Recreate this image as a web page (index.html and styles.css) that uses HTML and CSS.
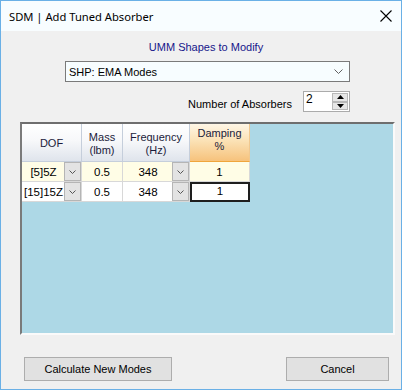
FILE: index.html
```html
<!DOCTYPE html>
<html>
<head>
<meta charset="utf-8">
<link rel="stylesheet" href="styles.css">
</head>
<body>
<div class="window">
  <div class="titlebar">
    <span class="title">SDM | Add Tuned Absorber</span>
    <svg class="close" width="12" height="12" viewBox="0 0 12 12"><path d="M0.5 0.5 L11.5 11.5 M11.5 0.5 L0.5 11.5" stroke="#000" stroke-width="1.1" fill="none"/></svg>
  </div>
  <div class="content">
    <div class="shapes-label">UMM Shapes to Modify</div>
    <div class="combo">
      <span class="combo-text">SHP: EMA Modes</span>
      <svg class="chev" width="9" height="5" viewBox="0 0 9 5"><path d="M0.5 0.5 L4.5 4.5 L8.5 0.5" stroke="#606060" fill="none"/></svg>
    </div>
    <div class="count-row">
      <span class="count-label">Number of Absorbers</span>
      <div class="spinner">
        <span class="spin-val">2</span>
        <div class="spin-btns">
          <div class="spin-btn"><svg width="7" height="4" viewBox="0 0 7 4"><path d="M3.5 0 L7 4 L0 4 Z" fill="#000"/></svg></div>
          <div class="spin-btn"><svg width="7" height="4" viewBox="0 0 7 4"><path d="M0 0 L7 0 L3.5 4 Z" fill="#000"/></svg></div>
        </div>
      </div>
    </div>
    <div class="gridbox">
      <div class="grid">
        <div class="hdr">DOF</div>
        <div class="hdr">Mass<br>(lbm)</div>
        <div class="hdr">Frequency<br>(Hz)</div>
        <div class="hdr hdr-sel">Damping<br>%</div>

        <div class="cell row1 combo-cell"><span class="cv">[5]5Z</span><span class="cbtn"><svg width="7" height="4" viewBox="0 0 7 4"><path d="M0.5 0.5 L3.5 3.5 L6.5 0.5" stroke="#555" fill="none"/></svg></span></div>
        <div class="cell row1">0.5</div>
        <div class="cell row1 combo-cell"><span class="cv">348</span><span class="cbtn"><svg width="7" height="4" viewBox="0 0 7 4"><path d="M0.5 0.5 L3.5 3.5 L6.5 0.5" stroke="#555" fill="none"/></svg></span></div>
        <div class="cell row1">1</div>

        <div class="cell combo-cell"><span class="cv">[15]15Z</span><span class="cbtn"><svg width="7" height="4" viewBox="0 0 7 4"><path d="M0.5 0.5 L3.5 3.5 L6.5 0.5" stroke="#555" fill="none"/></svg></span></div>
        <div class="cell">0.5</div>
        <div class="cell combo-cell"><span class="cv">348</span><span class="cbtn"><svg width="7" height="4" viewBox="0 0 7 4"><path d="M0.5 0.5 L3.5 3.5 L6.5 0.5" stroke="#555" fill="none"/></svg></span></div>
        <div class="cell current">1</div>
      </div>
    </div>
    <div class="buttons">
      <div class="btn btn-calc">Calculate New Modes</div>
      <div class="btn btn-cancel">Cancel</div>
    </div>
  </div>
</div>
</body>
</html>
```

FILE: styles.css
```css
* { box-sizing: border-box; }
html, body { margin: 0; padding: 0; }
body {
  width: 402px;
  height: 390px;
  font-family: "Liberation Sans", Arial, sans-serif;
  font-size: 11px;
  color: #000;
  overflow: hidden;
}
.window {
  width: 402px;
  height: 390px;
  border: 1px solid #6ab0e6;
  display: flex;
  flex-direction: column;
  background: #f0f0f0;
}
.titlebar {
  height: 30px;
  background: #f8fdff;
  display: flex;
  align-items: center;
  justify-content: space-between;
  padding: 0 9px 0 8px;
}
.title {
  font-family: "Noto Sans", "Open Sans", sans-serif;
  font-size: 11.2px;
  color: #000;
}
.close { display: block; }
.content {
  flex: 1;
  display: flex;
  flex-direction: column;
  background: #f0f0f0;
}
.shapes-label {
  margin-top: 10px;
  height: 13px;
  line-height: 13px;
  text-align: center;
  padding-left: 10px;
  color: #16168a;
}
.combo {
  margin-top: 7px;
  margin-left: 64px;
  width: 285px;
  height: 21px;
  border: 1px solid #7a7a7a;
  background: #f7fdff;
  display: flex;
  align-items: center;
  justify-content: space-between;
  padding: 0 6px 0 3px;
}
.chev { display: block; }
.count-row {
  margin-top: 9px;
  height: 21px;
  display: flex;
  align-items: center;
  justify-content: flex-end;
  padding-right: 51px;
}
.count-label { margin-right: 11px; margin-top: 4px; }
.spinner {
  width: 47px;
  height: 21px;
  border: 1px solid #ababab;
  background: #fff;
  display: flex;
  justify-content: space-between;
}
.spin-val { font-size: 12px; padding-left: 2px; line-height: 15px; }
.spin-btns {
  width: 16px;
  display: flex;
  flex-direction: column;
  padding: 1px 0 1px 0;
  margin-right: 1px;
}
.spin-btn {
  flex: 1;
  background: #e6e6e6;
  border: 1px solid #b8b8b8;
  display: flex;
  align-items: center;
  justify-content: center;
}
.spin-btn svg { display: block; }
.gridbox {
  margin-top: 10px;
  margin-left: 19px;
  width: 375px;
  height: 213px;
  background: #add8e6;
  border-top: 2px solid #6e6e6e;
  border-left: 2px solid #7a7a7a;
  border-right: 2px solid #fafafa;
  border-bottom: 2px solid #fafafa;
}
.grid {
  display: grid;
  grid-template-columns: 60px 41px 67px 60px;
  grid-template-rows: 38px 20px 20px;
  width: 228px;
}
.hdr {
  background: linear-gradient(#ffffff 0%, #f7f8fa 45%, #dfe4ec 100%);
  border-right: 1px solid #c5cedb;
  border-bottom: 1px solid #c5cedb;
  display: flex;
  align-items: center;
  justify-content: center;
  text-align: center;
  line-height: 13px;
  color: #1b1b3a;
  padding-top: 2px;
}
.hdr-sel {
  background: linear-gradient(#fef6e6 0%, #fbe2b6 45%, #f6c27c 100%);
  border-bottom: 1px solid #f0a53c;
  border-right: 1px solid #f0c890;
  align-items: flex-start;
  padding-top: 3px;
}
.cell {
  background: #fff;
  border-right: 1px solid #d8d8d8;
  border-bottom: 1px solid #d8d8d8;
  display: flex;
  align-items: center;
  justify-content: center;
  font-size: 11.5px;
}
.row1 { background: #fffde6; }
.combo-cell { justify-content: space-between; padding-left: 1px; }
.cv { flex: 1; text-align: center; white-space: nowrap; }
.cbtn {
  flex: none;
  width: 17px;
  height: 19px;
  background: #e3e3e3;
  border: 1px solid #b5b5b5;
  display: flex;
  align-items: center;
  justify-content: center;
}
.cbtn svg { display: block; }
.current {
  border: 2px solid #1e1e1e;
  align-items: flex-start;
  padding-top: 1px;
}
.buttons {
  margin-top: 22px;
  display: flex;
  justify-content: space-between;
  padding: 0 12px 0 23px;
}
.btn {
  height: 24px;
  background: #e1e1e1;
  border: 1px solid #adadad;
  display: flex;
  align-items: center;
  justify-content: center;
  color: #000;
}
.btn-calc { width: 148px; }
.btn-cancel { width: 103px; }
```
